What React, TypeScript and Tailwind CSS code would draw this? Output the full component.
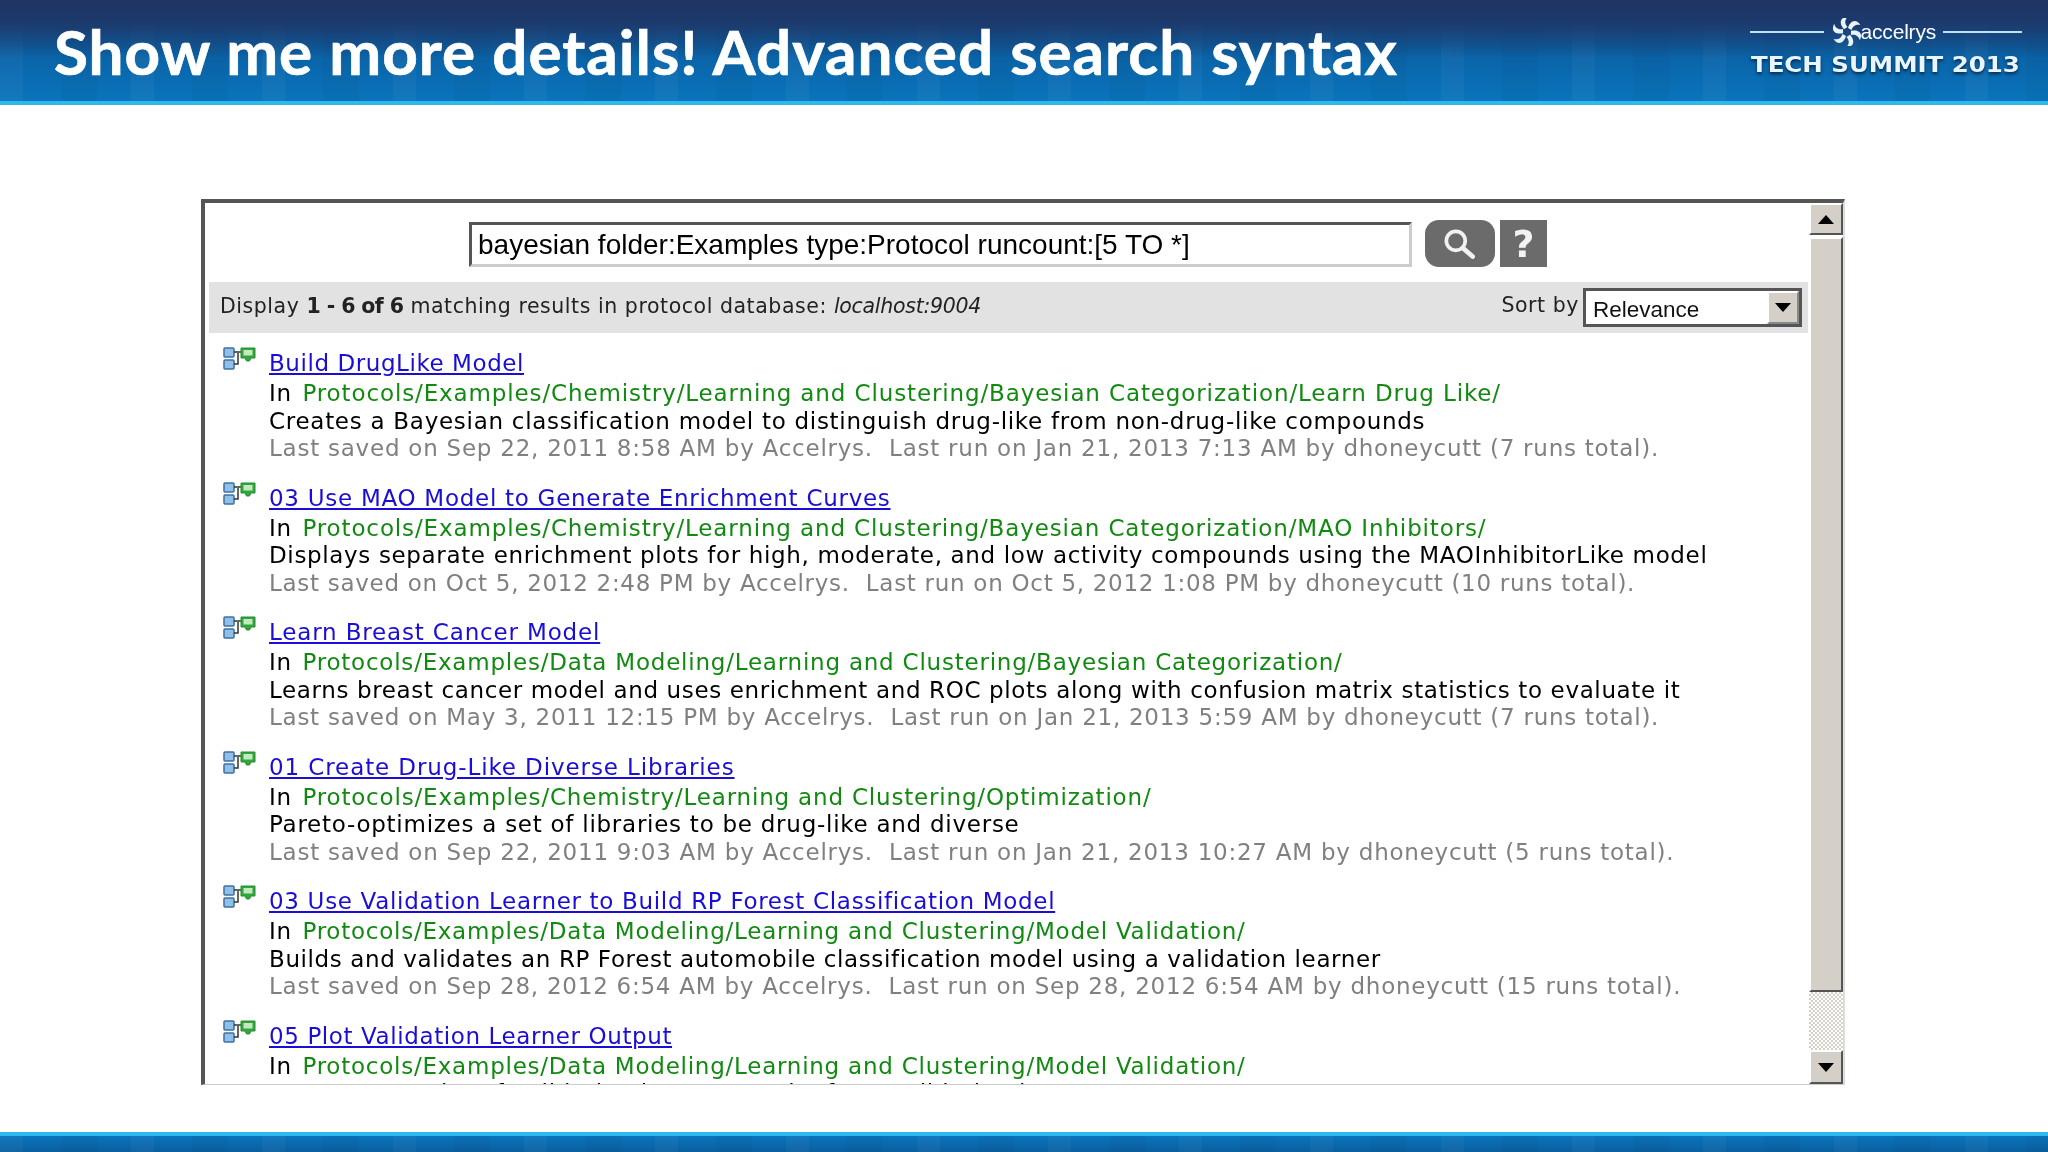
const results = [
  {
    title: "Build DrugLike Model",
    titleClass: "tracking-[0.57px]",
    path: "Protocols/Examples/Chemistry/Learning and Clustering/Bayesian Categorization/Learn Drug Like/",
    pathClass: "tracking-[0.88px]",
    desc: "Creates a Bayesian classification model to distinguish drug-like from non-drug-like compounds",
    descClass: "tracking-[0.72px]",
    meta: "Last saved on Sep 22, 2011 8:58 AM by Accelrys.\u00a0 Last run on Jan 21, 2013 7:13 AM by dhoneycutt (7 runs total).",
    metaClass: "tracking-[0.76px]",
  },
  {
    title: "03 Use MAO Model to Generate Enrichment Curves",
    titleClass: "tracking-[0.72px]",
    path: "Protocols/Examples/Chemistry/Learning and Clustering/Bayesian Categorization/MAO Inhibitors/",
    pathClass: "tracking-[0.87px]",
    desc: "Displays separate enrichment plots for high, moderate, and low activity compounds using the MAOInhibitorLike model",
    descClass: "tracking-[0.65px]",
    meta: "Last saved on Oct 5, 2012 2:48 PM by Accelrys.\u00a0 Last run on Oct 5, 2012 1:08 PM by dhoneycutt (10 runs total).",
    metaClass: "tracking-[0.71px]",
  },
  {
    title: "Learn Breast Cancer Model",
    titleClass: "tracking-[0.84px]",
    path: "Protocols/Examples/Data Modeling/Learning and Clustering/Bayesian Categorization/",
    pathClass: "tracking-[0.78px]",
    desc: "Learns breast cancer model and uses enrichment and ROC plots along with confusion matrix statistics to evaluate it",
    descClass: "tracking-[0.63px]",
    meta: "Last saved on May 3, 2011 12:15 PM by Accelrys.\u00a0 Last run on Jan 21, 2013 5:59 AM by dhoneycutt (7 runs total).",
    metaClass: "tracking-[0.74px]",
  },
  {
    title: "01 Create Drug-Like Diverse Libraries",
    titleClass: "tracking-[0.9px]",
    path: "Protocols/Examples/Chemistry/Learning and Clustering/Optimization/",
    pathClass: "tracking-[0.82px]",
    desc: "Pareto-optimizes a set of libraries to be drug-like and diverse",
    descClass: "tracking-[0.74px]",
    meta: "Last saved on Sep 22, 2011 9:03 AM by Accelrys.\u00a0 Last run on Jan 21, 2013 10:27 AM by dhoneycutt (5 runs total).",
    metaClass: "tracking-[0.76px]",
  },
  {
    title: "03 Use Validation Learner to Build RP Forest Classification Model",
    titleClass: "tracking-[0.68px]",
    path: "Protocols/Examples/Data Modeling/Learning and Clustering/Model Validation/",
    pathClass: "tracking-[0.76px]",
    desc: "Builds and validates an RP Forest automobile classification model using a validation learner",
    descClass: "tracking-[0.61px]",
    meta: "Last saved on Sep 28, 2012 6:54 AM by Accelrys.\u00a0 Last run on Sep 28, 2012 6:54 AM by dhoneycutt (15 runs total).",
    metaClass: "tracking-[0.75px]",
  },
  {
    title: "05 Plot Validation Learner Output",
    titleClass: "tracking-[0.6px]",
    path: "Protocols/Examples/Data Modeling/Learning and Clustering/Model Validation/",
    pathClass: "tracking-[0.76px]",
    desc: "Generates a plot of validation learner results for a validation learner",
    descClass: "tracking-[0.72px]",
    meta: "",
    metaClass: "",
  },
];

function ProtocolIcon() {
  return (
    <svg viewBox="0 0 33 23" className="w-[33px] h-[23px] shrink-0">
      <rect x="1" y="1" width="10" height="9" rx="1" fill="#8fc0ea" stroke="#3f6f9f" strokeWidth="1.5" />
      <rect x="1" y="13" width="10" height="9" rx="1" fill="#8fc0ea" stroke="#3f6f9f" strokeWidth="1.5" />
      <path d="M11 5h8M11 17h4V6" fill="none" stroke="#333" strokeWidth="1.5" />
      <path d="M18 1h14v10h-4l-1.500 3h-3L22 11h-4z" fill="#2fa83a" stroke="#2a8a33" strokeWidth="1" />
      <rect x="20.500" y="3" width="9" height="5.500" fill="#c5e8c0" />
    </svg>
  );
}

function Arrow({ up }: { up?: boolean }) {
  return (
    <svg viewBox="0 0 16 9" className="w-[16px] h-[9px]">
      <path d={up ? "M8 0l8 9H0z" : "M0 0h16L8 9z"} fill="#000" />
    </svg>
  );
}

function ScrollButton({ up, className }: { up?: boolean; className: string }) {
  return (
    <div className={`flex items-center justify-center bg-[#d4d0c8] border-2 border-t-white border-l-white border-r-[#555] border-b-[#555] ${className}`}>
      <Arrow up={up} />
    </div>
  );
}

function AccelrysLogo() {
  return (
    <div className="flex flex-col items-center text-white mb-[8px]">
      <div className="flex items-center">
        <div className="w-[74px] h-[2px] bg-[#bfe2f7]" />
        <svg viewBox="-14 -14 28 28" className="w-[28px] h-[28px] ml-[9px]">
          {[0, 60, 120, 180, 240, 300].map((deg) => (
            <path
              key={deg}
              d="M1 -4C3 -11 9 -14 13.500 -7C10 -8 6 -7 4.500 -2Z"
              fill="#e8f3fb"
              transform={`rotate(${deg})`}
            />
          ))}
        </svg>
        <span className="font-['Liberation_Sans',sans-serif] text-[21px] leading-none tracking-[-0.2px] mr-[7px]">accelrys</span>
        <div className="w-[79px] h-[2px] bg-[#bfe2f7]" />
      </div>
      <div className="font-['DejaVu_Sans',sans-serif] font-bold text-[21px] leading-none mt-[9px] whitespace-nowrap scale-x-[1.165] text-[#eaf6ff] [text-shadow:0_2px_3px_#06294d]">
        TECH SUMMIT 2013
      </div>
    </div>
  );
}

export default function App() {
  return (
    <div className="w-[2048px] h-[1152px] flex flex-col bg-white overflow-hidden blur-[0.4px] font-['DejaVu_Sans',sans-serif]">
      <header className="h-[105px] shrink-0 flex items-center justify-between pl-[54px] pr-[26px] border-b-[4px] border-[#30b8ea] bg-[linear-gradient(180deg,#1f3564_0%,#1c3a6c_22%,rgba(5,90,152,0)_58%),repeating-linear-gradient(90deg,rgba(255,255,255,0.035)_0_23px,transparent_23px_61px,rgba(0,0,0,0.03)_61px_97px,transparent_97px_131px),linear-gradient(180deg,#0a4f8e_0%,#0a74bc_100%)]">
        <h1 className="font-['Lato',sans-serif] font-bold text-[62px] tracking-[1px] leading-none text-white mt-[1px] whitespace-nowrap [-webkit-text-stroke:0.7px_white]">
          Show me more details! Advanced search syntax
        </h1>
        <AccelrysLogo />
      </header>

      <main className="flex-1 min-h-0 pt-[94px] pl-[201px]">
        <div className="w-[1644px] h-[886px] flex border-t-[4px] border-l-[4px] border-t-[#555] border-l-[#555] border-b-[1px] border-b-[#ccc] border-r-[2px] border-r-[#ddd] overflow-hidden">
          <div className="flex-1 min-w-0 overflow-hidden">
            <div className="flex items-start pt-[17px] pl-[264px]">
              <div className="w-[943px] h-[45px] mt-[2px] flex items-center pl-[6px] bg-white border-[3px] border-t-[#555] border-l-[#555] border-b-[#ccc] border-r-[#ccc] font-['Liberation_Sans',sans-serif] text-[28px] text-black">
                bayesian folder:Examples type:Protocol runcount:[5 TO *]
              </div>
              <button className="ml-[13px] w-[70px] h-[47px] rounded-[14px] bg-[#6b6b6b] flex items-center justify-center">
                <svg viewBox="0 0 40 32" className="w-[42px] h-[34px]">
                  <circle cx="16" cy="13" r="9" fill="none" stroke="#f2f2f2" strokeWidth="3.500" />
                  <path d="M23 20l9 8" stroke="#f2f2f2" strokeWidth="4.500" strokeLinecap="round" />
                </svg>
              </button>
              <button className="ml-[5px] w-[47px] h-[47px] bg-[#6b6b6b] flex items-center justify-center font-['DejaVu_Sans',sans-serif] font-bold text-[38px] leading-none text-[#f2f2f2]">
                ?
              </button>
            </div>

            <div className="ml-[4px] mt-[15px] w-[1599px] h-[51px] bg-[#e2e2e2] flex items-center justify-between pl-[11px] pr-[6px] text-[20.5px] tracking-[0.55px] text-[#222]">
              <div className="mt-[-2px]">
                Display <b className="tracking-[-0.6px]">1 - 6 of 6</b> matching results in protocol database: <i className="tracking-[-0.28px]">localhost:9004</i>
              </div>
              <div className="flex items-center gap-[4px]">
                <span className="mt-[-4px]">Sort by</span>
                <div className="w-[219px] h-[39px] flex border-[3px] border-[#555] bg-white font-['Liberation_Sans',sans-serif] text-[22.5px] tracking-normal text-[#111]">
                  <span className="flex-1 pl-[7px] leading-[37px]">Relevance</span>
                  <div className="w-[32px] flex items-center justify-center bg-[#d4d0c8] border-2 border-t-white border-l-white border-r-[#888] border-b-[#888]">
                    <Arrow />
                  </div>
                </div>
              </div>
            </div>

            <ul className="pt-[14px] pl-[18px]">
              {results.map((r) => (
                <li key={r.title} className="flex gap-[14px] mb-[19px] text-[23px] leading-[27.5px] tracking-[0.72px]">
                  <ProtocolIcon />
                  <div className="whitespace-nowrap ml-[-1px]">
                    <a href="#" className={`block leading-[33px] text-[#1a0dd6] underline ${r.titleClass}`}>
                      {r.title}
                    </a>
                    <div className="text-black">
                      In <span className={`ml-[2.6px] text-[#128a12] ${r.pathClass}`}>{r.path}</span>
                    </div>
                    <div className={`text-black ${r.descClass}`}>{r.desc}</div>
                    <div className={`text-[#808080] ${r.metaClass}`}>{r.meta}</div>
                  </div>
                </li>
              ))}
            </ul>
          </div>

          <div className="w-[34px] shrink-0 flex flex-col">
            <ScrollButton up className="h-[32px] shrink-0" />
            <div className="mt-[2px] h-[755px] shrink-0 bg-[#d4d0c8] border-2 border-t-white border-l-white border-r-[#555] border-b-[#555]" />
            <div className="flex-1 bg-[repeating-conic-gradient(#d4d0c8_0_25%,#fff_0_50%)] bg-[length:4px_4px]" />
            <ScrollButton className="h-[34px] shrink-0" />
          </div>
        </div>
      </main>

      <footer className="h-[20px] shrink-0 border-t-[4px] border-[#30b8ea] bg-[repeating-linear-gradient(90deg,rgba(255,255,255,0.035)_0_23px,transparent_23px_61px,rgba(0,0,0,0.03)_61px_97px,transparent_97px_131px),linear-gradient(180deg,#0a74bc_0%,#0a5f9f_100%)]" />
    </div>
  );
}
